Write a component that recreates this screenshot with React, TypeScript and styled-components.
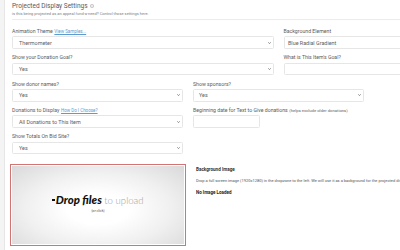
import React from 'react';
import styled, { createGlobalStyle } from 'styled-components';

const GlobalStyle = createGlobalStyle`
  html, body {
    margin: 0;
    padding: 0;
    background: #f4f4f4;
    overflow: hidden;
  }
  * {
    box-sizing: border-box;
  }
`;

interface RowProps {
  cols: number;
}

interface BoxProps {
  pad?: number;
  w?: number;
}

const Page = styled.div`
  width: 400px;
  height: 250px;
  overflow: hidden;
  display: flex;
  font-family: Roboto, 'Liberation Sans', sans-serif;
`;

const Panel = styled.div`
  flex: none;
  width: 560px;
  height: 250px;
  margin-left: 4px;
  padding: 1.5px 0 0 7px;
  background: #ffffff;
  border-left: 1px solid #e6e6e6;
`;

const Header = styled.div`
  padding-bottom: 3px;
  margin-bottom: 8.2px;
  border-bottom: 1px solid #ececec;
`;

const Title = styled.div`
  display: flex;
  align-items: center;
  gap: 2px;
  font-size: 6.5px;
  line-height: 8px;
  color: #5a5a5a;
  white-space: nowrap;

  svg {
    width: 4px;
    height: 4px;
  }
`;

const Subtitle = styled.div`
  margin-top: 1.5px;
  font-size: 4px;
  line-height: 5px;
  color: #808080;
  white-space: nowrap;
`;

const Row = styled.div<RowProps>`
  width: 533px;
  display: grid;
  grid-template-columns: repeat(${(p) => p.cols}, 1fr);
  column-gap: 10px;
`;

const Field = styled.div`
  margin-bottom: 5.5px;
  min-width: 0;
`;

const Label = styled.div`
  font-size: 5.2px;
  line-height: 7px;
  margin-bottom: 1.3px;
  color: #5c5c5c;
  white-space: nowrap;
`;

const Link = styled.span`
  margin-left: 1.5px;
  font-size: 4.5px;
  color: #5a9bd0;
  text-decoration: underline;
`;

const Hint = styled.span`
  margin-left: 1.5px;
  font-size: 4.2px;
  color: #666666;
`;

const Box = styled.div<BoxProps>`
  width: ${(p) => (p.w ? `${p.w}px` : '100%')};
  height: 12.5px;
  display: flex;
  align-items: center;
  justify-content: space-between;
  padding: 0 2px 0 ${(p) => p.pad ?? 6}px;
  border: 1px solid #e6e6e6;
  border-radius: 1.5px;
  background: #ffffff;
  font-size: 5.4px;
  color: #606060;
  white-space: nowrap;

  svg {
    width: 3px;
    height: 2px;
    flex: none;
  }
`;

const DropRow = styled(Row)`
  margin-top: 4.3px;
`;

const DropZone = styled.div`
  margin-left: -2px;
  width: 176px;
  height: 82px;
  padding: 1px;
  border: 1.5px solid #d27474;
  background: #ffffff;
`;

const DropInner = styled.div`
  width: 100%;
  height: 100%;
  display: flex;
  flex-direction: column;
  align-items: center;
  justify-content: center;
  padding-bottom: 4px;
  background: radial-gradient(ellipse at 50% 55%, #ffffff 25%, #f0f0f0 60%, #d9d9d9 100%);
  font-family: Lato, 'Open Sans', sans-serif;
`;

const DropLine = styled.div`
  display: flex;
  align-items: baseline;
  white-space: nowrap;
`;

const DropDash = styled.span`
  display: inline-block;
  width: 2.5px;
  height: 1.6px;
  margin-right: 0.8px;
  background: #111111;
  transform: translateY(-3px);
`;

const DropStrong = styled.span`
  font-size: 11.4px;
  font-weight: 900;
  font-style: italic;
  color: #111111;
`;

const DropLight = styled.span`
  margin-left: 2.5px;
  font-size: 9.6px;
  font-weight: 300;
  color: #a0a0a0;
`;

const DropSub = styled.div`
  margin-top: 2px;
  font-size: 3.6px;
  color: #555555;
`;

const Info = styled.div`
  grid-column: span 2;
  padding-top: 3.5px;
  white-space: nowrap;
  overflow: hidden;
`;

const InfoTitle = styled.div`
  font-size: 4.6px;
  line-height: 5.5px;
  font-weight: 700;
  color: #333333;
`;

const InfoText = styled.div`
  margin-top: 5.2px;
  font-size: 4px;
  line-height: 5px;
  color: #555555;
`;

const InfoStatus = styled.div`
  margin-top: 7px;
  font-size: 4.5px;
  line-height: 5.5px;
  font-weight: 700;
  color: #222222;
`;

function Chevron() {
  return (
    <svg viewBox="0 0 6 4">
      <polyline points="0.6,0.6 3,3.2 5.4,0.6" fill="none" stroke="#555" strokeWidth="1.3" />
    </svg>
  );
}

function InfoIcon() {
  return (
    <svg viewBox="0 0 10 10">
      <circle cx="5" cy="5" r="4.2" fill="none" stroke="#777" strokeWidth="0.9" />
      <line x1="5" y1="4.3" x2="5" y2="7.3" stroke="#777" strokeWidth="1" />
      <circle cx="5" cy="2.9" r="0.6" fill="#777" />
    </svg>
  );
}

function Select({ value, pad }: { value: string; pad?: number }) {
  return (
    <Box pad={pad}>
      <span>{value}</span>
      <Chevron />
    </Box>
  );
}

export default function App() {
  return (
    <>
      <GlobalStyle />
      <Page>
        <Panel>
          <Header>
            <Title>
              Projected Display Settings <InfoIcon />
            </Title>
            <Subtitle>is this being projected as an appeal fund-a-need? Control those settings here.</Subtitle>
          </Header>

          <Row cols={2}>
            <Field>
              <Label>
                Animation Theme<Link>View Samples...</Link>
              </Label>
              <Select value="Thermometer" />
            </Field>
            <Field>
              <Label>Background Element</Label>
              <Select value="Blue Radial Gradient" pad={3.5} />
            </Field>
          </Row>

          <Row cols={2}>
            <Field>
              <Label>Show your Donation Goal?</Label>
              <Select value="Yes" />
            </Field>
            <Field>
              <Label>What is This Item's Goal?</Label>
              <Box pad={3.5} />
            </Field>
          </Row>

          <Row cols={3}>
            <Field>
              <Label>Show donor names?</Label>
              <Select value="Yes" />
            </Field>
            <Field>
              <Label>Show sponsors?</Label>
              <Select value="Yes" pad={5} />
            </Field>
          </Row>

          <Row cols={3}>
            <Field>
              <Label>
                Donations to Display<Link>How Do I Choose?</Link>
              </Label>
              <Select value="All Donations to This Item" />
            </Field>
            <Field>
              <Label>
                Beginning date for Text to Give donations<Hint>(helps exclude older donations)</Hint>
              </Label>
              <Box w={67} pad={3.5} />
            </Field>
          </Row>

          <Row cols={3}>
            <Field>
              <Label>Show Totals On Bid Site?</Label>
              <Select value="Yes" />
            </Field>
          </Row>

          <DropRow cols={3}>
            <DropZone>
              <DropInner>
                <DropLine>
                  <DropDash />
                  <DropStrong>Drop files</DropStrong>
                  <DropLight>to upload</DropLight>
                </DropLine>
                <DropSub>(or click)</DropSub>
              </DropInner>
            </DropZone>
            <Info>
              <InfoTitle>Background Image</InfoTitle>
              <InfoText>
                Drop a full screen image (1920x1280) in the dropzone to the left. We will use it as a background for the projected display.
              </InfoText>
              <InfoStatus>No Image Loaded</InfoStatus>
            </Info>
          </DropRow>
        </Panel>
      </Page>
    </>
  );
}
